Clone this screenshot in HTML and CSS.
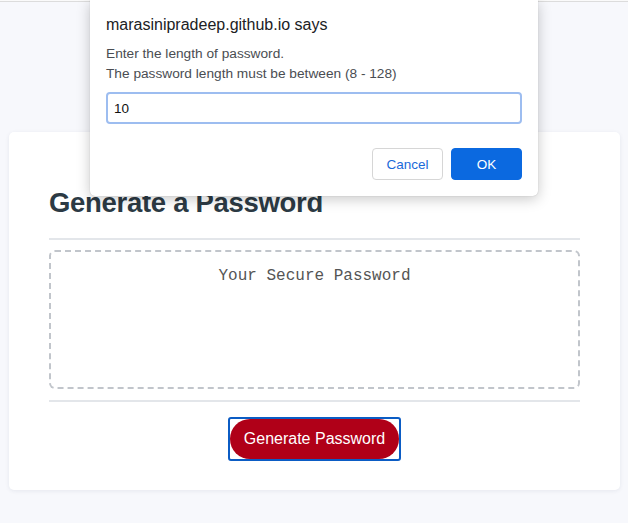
FILE: index.html
```html
<!DOCTYPE html>
<html lang="en">
<head>
<meta charset="utf-8">
<title>Password Generator</title>
<link rel="stylesheet" href="styles.css">
</head>
<body>
<div class="chrome-line"></div>
<main class="wrapper">
  <section class="card">
    <h1 class="card-title">Generate a Password</h1>
    <hr class="divider">
    <div class="password-box">
      <p class="placeholder">Your Secure Password</p>
    </div>
    <hr class="divider divider-bottom">
    <div class="actions">
      <span class="focus-ring"><button class="btn-generate" type="button">Generate Password</button></span>
    </div>
  </section>
</main>

<div class="dialog" role="dialog">
  <div class="dialog-title">marasinipradeep.github.io says</div>
  <div class="dialog-message">
    <div>Enter the length of password.</div>
    <div>The password length must be between (8 - 128)</div>
  </div>
  <input class="dialog-input" type="text" value="10">
  <div class="dialog-buttons">
    <button class="dlg-btn dlg-cancel" type="button">Cancel</button>
    <button class="dlg-btn dlg-ok" type="button">OK</button>
  </div>
</div>
</body>
</html>
```

FILE: styles.css
```css
* { box-sizing: border-box; }

html, body {
  margin: 0;
  padding: 0;
}

body {
  background: #f7f8fc;
  font-family: "Liberation Sans", Arial, sans-serif;
  width: 628px;
  height: 523px;
  overflow: hidden;
  position: relative;
}

.chrome-line {
  height: 2px;
  border-top: 1px solid #fafafa;
  background: #dcdcdc;
}

.wrapper {
  padding: 130px 8px 0 9px;
}

.card {
  width: 611px;
  background: #ffffff;
  border-radius: 5px;
  box-shadow: 0 1px 4px rgba(30, 40, 80, 0.08);
  padding: 54px 40px 29px 40px;
}

.card-title {
  margin: 0 0 18px 0;
  font-size: 27.5px;
  line-height: 34px;
  font-weight: 700;
  color: #2c3a44;
  letter-spacing: -0.3px;
}

.divider {
  margin: 0;
  border: 0;
  height: 2px;
  background: #e3e6ea;
}

.password-box {
  margin-top: 10px;
  height: 139px;
  border: 2px dashed #c1c5cb;
  border-radius: 6px;
  padding-top: 14px;
}

.placeholder {
  margin: 0;
  text-align: center;
  font-family: "Liberation Mono", "Courier New", monospace;
  font-size: 16px;
  line-height: 20px;
  color: #555555;
}

.divider-bottom {
  margin-top: 11px;
}

.actions {
  display: flex;
  justify-content: center;
  margin-top: 15px;
}

.focus-ring {
  display: inline-flex;
  border: 2px solid #0b5cc4;
  border-radius: 3px;
  background: #ffffff;
}

.btn-generate {
  border: 0;
  margin: 0;
  height: 40px;
  width: 169px;
  border-radius: 20px;
  background: #b00018;
  color: #ffffff;
  font-family: "Liberation Sans", Arial, sans-serif;
  font-size: 16px;
  padding: 0;
  cursor: pointer;
}

.dialog {
  position: absolute;
  left: 90px;
  top: 0;
  width: 448px;
  height: 196px;
  background: #ffffff;
  border-radius: 0 0 5px 5px;
  box-shadow: 0 3px 14px rgba(0, 0, 0, 0.22), 0 0 1px rgba(0, 0, 0, 0.25);
  padding: 14px 16px 16px 16px;
  display: flex;
  flex-direction: column;
}

.dialog-title {
  font-size: 16px;
  line-height: 22px;
  color: #202124;
}

.dialog-message {
  margin-top: 8px;
  font-size: 13.7px;
  line-height: 20px;
  color: #4a4d52;
}

.dialog-input {
  margin-top: 8px;
  width: 416px;
  height: 32px;
  border: 2px solid #9dbdf0;
  border-radius: 4px;
  padding: 0 6px;
  font-family: "Liberation Sans", Arial, sans-serif;
  font-size: 13.5px;
  color: #111111;
  outline: none;
}

.dialog-buttons {
  margin-top: 24px;
  display: flex;
  justify-content: flex-end;
  gap: 8px;
}

.dlg-btn {
  width: 71px;
  height: 32px;
  border-radius: 4px;
  font-family: "Liberation Sans", Arial, sans-serif;
  font-size: 13.5px;
  padding: 0;
}

.dlg-cancel {
  background: #ffffff;
  border: 1px solid #d6d6d6;
  color: #1a6ad9;
}

.dlg-ok {
  background: #0b69e0;
  border: 1px solid #0b69e0;
  color: #ffffff;
}
```
